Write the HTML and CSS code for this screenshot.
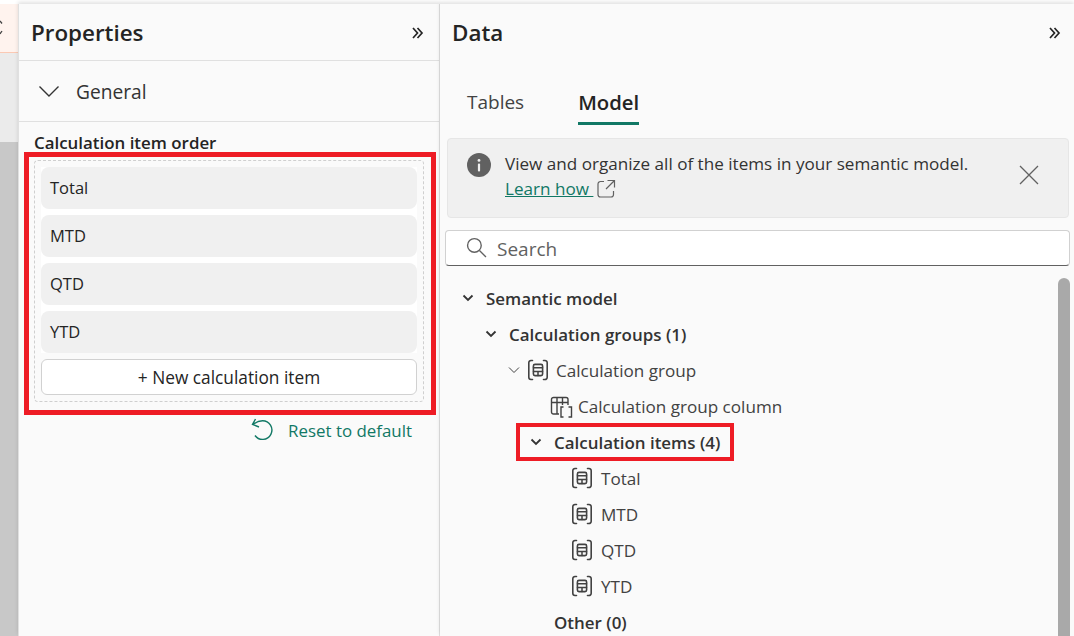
FILE: index.html
```html
<!DOCTYPE html>
<html lang="en">
<head>
    <meta charset="UTF-8">
    <title>Calculation group properties</title>
    <link rel="stylesheet" href="styles.css">
</head>
<body>
    <svg class="defs" width="0" height="0">
        <symbol id="calcItem" viewBox="0 0 24 24">
            <g fill="none" stroke="currentColor" stroke-width="1.6" stroke-linecap="round">
                <path d="M6.5 2.500H5A2.200 2.200 0 0 0 2.800 4.700V19.300A2.200 2.200 0 0 0 5 21.500H6.500"/>
                <path d="M17.500 2.500H19A2.200 2.200 0 0 1 21.200 4.700V19.300A2.200 2.200 0 0 1 19 21.500H17.500"/>
                <rect x="7.400" y="6.400" width="9.200" height="11.200" rx="1.600"/>
                <path d="M7.500 9.800H16.500M7.500 13.400H16.500M12 13.400V17.500" stroke-width="1.500"/>
            </g>
        </symbol>
        <symbol id="chevronDouble" viewBox="0 0 14 14">
            <path d="M2 2 6.500 7 2 12M6.500 2 11 7 6.500 12" fill="none" stroke="currentColor" stroke-width="1.700"/>
        </symbol>
        <symbol id="chevronBold" viewBox="0 0 12 12">
            <path d="M1.500 3.500 6 8 10.500 3.500" fill="none" stroke="currentColor" stroke-width="1.800"/>
        </symbol>
    </svg>

    <div class="app">
        <div class="strip">
            <div class="stripTab">
                <svg width="3" height="16" viewBox="0 0 3 16"><path d="M0 1 2 3.500M0 14 2 11" fill="none" stroke="#424242" stroke-width="1.300"/></svg>
            </div>
            <div class="stripLight"></div>
            <div class="stripDark"></div>
        </div>

        <!-- properties pane -->
        <section class="props">
            <header class="paneHead">
                <h1>Properties</h1>
                <svg class="collapse" width="14" height="14"><use href="#chevronDouble"/></svg>
            </header>
            <div class="general">
                <svg width="22" height="14" viewBox="0 0 22 14"><path d="M1.500 2.500 11 12 20.500 2.500" fill="none" stroke="currentColor" stroke-width="1.400"/></svg>
                <span>General</span>
            </div>
            <div class="orderTitle">Calculation item order</div>
            <div class="redBox">
                <div class="dashed">
                    <div class="itemList">
                        <div class="orderItem">Total</div>
                        <div class="orderItem">MTD</div>
                        <div class="orderItem">QTD</div>
                        <div class="orderItem">YTD</div>
                    </div>
                    <button class="newItem">+ New calculation item</button>
                </div>
            </div>
            <div class="reset">
                <svg width="24" height="24" viewBox="0 0 24 24"><path d="M4.500 1 1.500 6.500 8 9M2 6.500C4.500 4.500 7.500 2.800 11.500 2.800A9.300 9.300 0 1 1 4 17.500" fill="none" stroke="currentColor" stroke-width="1.400"/></svg>
                <span>Reset to default</span>
            </div>
        </section>

        <!-- data pane -->
        <section class="data">
            <header class="paneHead dataHead">
                <h1>Data</h1>
                <svg class="collapse" width="14" height="14"><use href="#chevronDouble"/></svg>
            </header>
            <nav class="tabs">
                <span class="tab">Tables</span>
                <span class="tab active">Model</span>
            </nav>
            <div class="banner">
                <svg class="infoIcon" width="24" height="24" viewBox="0 0 24 24">
                    <circle cx="12" cy="12" r="12" fill="#616161"/>
                    <circle cx="12" cy="7.400" r="1.400" fill="#f0f0f0"/>
                    <rect x="10.900" y="10.400" width="2.200" height="8" rx="1" fill="#f0f0f0"/>
                </svg>
                <div class="bannerText">
                    <div>View and organize all of the items in your semantic model.</div>
                    <div class="learnLine">
                        <a class="learn">Learn how&nbsp;</a>
                        <svg width="20" height="20" viewBox="0 0 20 20"><path d="M8 2.500H4.500A2.500 2.500 0 0 0 2 5V15.500A2.500 2.500 0 0 0 4.500 18H15A2.500 2.500 0 0 0 17.500 15.500V12M11.500 1.500H18.500V8.500M18.500 1.500 10 10" fill="none" stroke="#616161" stroke-width="1.200"/></svg>
                    </div>
                </div>
                <svg class="closeIcon" width="22" height="22" viewBox="0 0 22 22"><path d="M2 2 20 20M20 2 2 20" stroke="#616161" stroke-width="1.300"/></svg>
            </div>
            <div class="search">
                <svg width="21" height="21" viewBox="0 0 20 20"><circle cx="8" cy="8" r="6.500" fill="none" stroke="#616161" stroke-width="1.300"/><path d="M12.800 12.800 19 19" stroke="#616161" stroke-width="1.300"/></svg>
                <span>Search</span>
            </div>
            <div class="treeWrap">
                <div class="tree">
                    <div class="row bold lvl0"><svg width="12" height="12"><use href="#chevronBold"/></svg><span>Semantic model</span></div>
                    <div class="row bold lvl1"><svg width="12" height="12"><use href="#chevronBold"/></svg><span>Calculation groups (1)</span></div>
                    <div class="row lvl2">
                        <svg width="12" height="12" viewBox="0 0 12 12"><path d="M1 3.500 6 8.500 11 3.500" fill="none" stroke="currentColor" stroke-width="1"/></svg>
                        <svg class="icon" width="24" height="24"><use href="#calcItem"/></svg>
                        <span>Calculation group</span>
                    </div>
                    <div class="row lvl3">
                        <svg class="icon" width="24" height="24" viewBox="0 0 24 24">
                            <g fill="none" stroke="currentColor" stroke-width="1.400">
                                <path d="M9 20H3.500A2 2 0 0 1 1.500 18V5.500A2 2 0 0 1 3.500 3.500H16A2 2 0 0 1 18 5.500V11"/>
                                <path d="M1.500 8.500H18M7 3.500V20M12.500 3.500V11"/>
                                <path d="M13.500 13H11V23H13.500M18.500 13H21.500V23H18.500"/>
                            </g>
                        </svg>
                        <span>Calculation group column</span>
                    </div>
                    <div class="row bold lvl4"><div class="marked"><svg width="12" height="12"><use href="#chevronBold"/></svg><span>Calculation items (4)</span></div></div>
                    <div class="row lvl5"><svg class="icon" width="24" height="24"><use href="#calcItem"/></svg><span>Total</span></div>
                    <div class="row lvl5"><svg class="icon" width="24" height="24"><use href="#calcItem"/></svg><span>MTD</span></div>
                    <div class="row lvl5"><svg class="icon" width="24" height="24"><use href="#calcItem"/></svg><span>QTD</span></div>
                    <div class="row lvl5"><svg class="icon" width="24" height="24"><use href="#calcItem"/></svg><span>YTD</span></div>
                    <div class="row bold lvl6"><span>Other (0)</span></div>
                </div>
                <div class="scrollbar"></div>
            </div>
        </section>
    </div>
</body>
</html>
```

FILE: styles.css
```css
html, body {
    margin: 0;
    height: 100%;
    overflow: hidden;
}

body {
    font-family: "Open Sans", "Noto Sans", sans-serif;
    color: #242424;
    background-color: #fafafa;
}

.defs {
    display: block;
    height: 0;
}

.app {
    display: flex;
    height: 636px;
    box-shadow: inset 0 4px 0 #fff;
}

/* left edge of the canvas */
.strip {
    width: 18px;
    flex: none;
    display: flex;
    flex-direction: column;
    padding-top: 4px;
    box-sizing: border-box;
    background-color: #fff;
}
.stripTab {
    height: 48px;
    box-sizing: content-box;
    background-color: #fff3ee;
    border-bottom: 1px solid #fbc9b4;
    display: flex;
    align-items: center;
}
.stripLight {
    height: 89px;
    background-color: #ebebeb;
}
.stripDark {
    flex: 1;
    background-color: #c8c8c8;
}

/* panes */
.props {
    width: 422px;
    flex: none;
    box-sizing: border-box;
    margin-top: 4px;
    border-left: 1px solid #e0e0e0;
    border-right: 1px solid #e0e0e0;
    background-color: #fafafa;
    box-shadow: 0 -2px 4px rgba(0, 0, 0, 0.12);
}
.data {
    flex: 1;
    min-width: 0;
    margin-top: 4px;
    display: flex;
    flex-direction: column;
    background-color: #fafafa;
    box-shadow: 0 -2px 4px rgba(0, 0, 0, 0.12);
}

.paneHead {
    height: 57px;
    box-sizing: border-box;
    display: flex;
    align-items: center;
    justify-content: space-between;
    padding: 2px 14px 0 12px;
    border-bottom: 1px solid #e0e0e0;
}
.paneHead h1 {
    margin: 0;
    font-size: 22.400px;
    line-height: 30px;
    font-weight: 600;
}
.collapse {
    color: #242424;
}
.dataHead {
    height: 58px;
    border-bottom: none;
    padding: 0 12px;
}

.general {
    height: 61px;
    box-sizing: border-box;
    display: flex;
    align-items: center;
    gap: 16px;
    padding-left: 19px;
    border-bottom: 1px solid #e0e0e0;
    font-size: 19.200px;
    color: #333;
}
.orderTitle {
    padding-left: 15px;
    height: 30px;
    line-height: 42px;
    font-size: 16.900px;
    font-weight: 600;
}

.redBox {
    width: 412px;
    box-sizing: border-box;
    margin-left: 5px;
    border: 5px solid #ee1c25;
    padding: 3px 7px 8px 5px;
}
.dashed {
    border: 1px dashed #cfcfcf;
    border-radius: 4px;
    padding: 6px;
}
.itemList {
    background-color: #fff;
}
.orderItem {
    height: 42px;
    line-height: 42px;
    margin-bottom: 6px;
    padding-left: 9px;
    border-radius: 8px;
    background-color: #f0f0f0;
    font-size: 16.500px;
}
.newItem {
    display: block;
    width: 100%;
    height: 36px;
    padding: 0;
    border: 1px solid #d1d1d1;
    border-radius: 6px;
    background-color: #fff;
    color: #242424;
    font-family: inherit;
    font-size: 17.300px;
}

.reset {
    display: flex;
    align-items: center;
    justify-content: flex-end;
    gap: 13px;
    margin-top: 3px;
    padding-right: 27px;
    color: #117865;
    font-size: 16.900px;
}

/* data pane */
.tabs {
    display: flex;
    gap: 54px;
    padding-left: 27px;
    height: 76px;
    box-sizing: border-box;
    padding-top: 13px;
}
.tab {
    height: 50px;
    box-sizing: border-box;
    padding-top: 9px;
    line-height: 36px;
    font-size: 19px;
    color: #424242;
}
.tab.active {
    font-size: 20.300px;
    font-weight: 600;
    color: #242424;
    border-bottom: 3px solid #117865;
}

.banner {
    margin-left: 7px;
    width: 622px;
    height: 80px;
    box-sizing: border-box;
    display: flex;
    align-items: flex-start;
    padding: 12px 28px 0 19px;
    border: 1px solid #e6e6e6;
    border-radius: 4px;
    background-color: #f0f0f0;
    font-size: 17.100px;
    line-height: 25px;
}
.infoIcon {
    flex: none;
    margin-top: 2px;
    margin-right: 14px;
}
.bannerText {
    flex: 1;
    color: #333;
}
.learnLine {
    display: flex;
    align-items: center;
}
.learn {
    color: #117865;
    text-decoration: underline;
    margin-right: 3px;
}
.closeIcon {
    flex: none;
    margin-top: 13px;
}

.search {
    margin: 12px 0 0 5px;
    width: 625px;
    height: 36px;
    box-sizing: border-box;
    display: flex;
    align-items: center;
    gap: 10px;
    padding: 2px 0 0 20px;
    border: 1px solid #d1d1d1;
    border-bottom-color: #616161;
    border-radius: 4px;
    background-color: #fff;
    font-size: 19px;
    color: #616161;
}
.search svg {
    margin-top: -3px;
}

.treeWrap {
    flex: 1;
    min-height: 0;
    display: flex;
    margin-top: 12px;
    overflow: hidden;
}
.tree {
    flex: 1;
    min-width: 0;
    padding-top: 2px;
}
.scrollbar {
    width: 12px;
    flex: none;
    margin-right: 4px;
    border-radius: 6px 6px 0 0;
    background-color: #a9a9a9;
}

.row {
    height: 36px;
    display: flex;
    align-items: center;
    gap: 6px;
    font-size: 17.100px;
    color: #424242;
}
.row.bold {
    font-size: 16.950px;
    font-weight: 600;
    color: #333;
    gap: 12px;
}
.lvl0 { padding-left: 22px; }
.lvl1 { padding-left: 45px; }
.lvl2 { padding-left: 68px; }
.lvl3 { padding-left: 110px; gap: 4px; }
.lvl4 { padding-left: 90px; }
.lvl5 { padding-left: 130px; gap: 7px; }
.lvl6 { padding-left: 114px; }

.marked {
    display: flex;
    align-items: center;
    gap: 12px;
    outline: 4px solid #ee1c25;
    height: 30px;
    margin-left: -10px;
    padding: 0 10px;
}
```
